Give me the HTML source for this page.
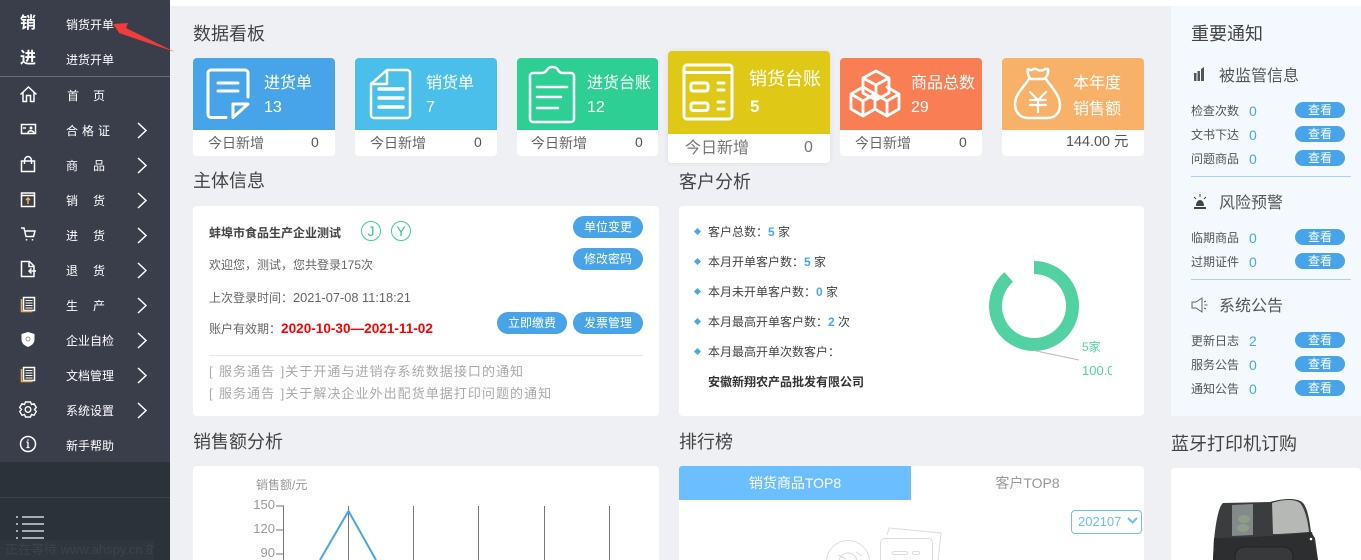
<!DOCTYPE html>
<html lang="zh-CN"><head><meta charset="utf-8"><title>数据看板</title>
<style>
html,body{margin:0;padding:0;width:1361px;height:560px;overflow:hidden;background:#eff0f4}
body{position:relative;font-family:"Liberation Sans","Noto Sans CJK SC",sans-serif;font-size:12px;color:#444}
.b{position:absolute}
.t{position:absolute;white-space:nowrap;line-height:20px;margin-top:1px}
.h{font-size:18px;color:#444;line-height:24px}
.m{color:#fff;font-size:12px;left:66px}
.c16{font-size:16px;color:#fff}
.g{font-size:14px;color:#666}
.n{font-size:14px;color:#555}
.card{position:absolute;background:#fff;border-radius:4px;overflow:hidden}
.btn{position:absolute;background:#48a4e8;color:#fff;text-align:center;border-radius:11px;width:70px;height:22px;line-height:22px;font-size:12px}
.v{position:absolute;left:1295px;width:50px;height:16px;line-height:16px;border-radius:8px;background:#48a4e8;color:#fff;text-align:center;font-size:12px}
.r{font-size:12px;color:#555;left:1191px}
.num{font-size:14px;color:#4aa7ee;left:1249px}
.s{font-size:16px;color:#555;left:1219px;margin-top:2px}
.cu{left:708px;font-size:12px;color:#444}
.cu b{color:#4aa7ee}
.d{position:absolute;left:695px;width:5px;height:5px;background:#4aa7ee;transform:rotate(45deg)}
.no{left:209px;color:#aaa;font-size:13px;letter-spacing:1.05px;word-spacing:.7px}
.y{font-size:13px;color:#999;text-align:right;width:40px;left:235px;margin-top:0}
</style></head><body>
<div class="b" style="left:170px;top:0;width:1191px;height:6px;background:#fff"></div>
<div class="b" style="left:0;top:0;width:170px;height:462px;background:#3a3d4a"></div>
<div class="b" style="left:0;top:462px;width:170px;height:98px;background:#2b3339"></div>
<div class="b" style="left:0;top:76px;width:170px;height:1px;background:#6c6e76"></div>
<div class="b" style="left:0;top:497px;width:170px;height:1px;background:#3d454b"></div>
<div class="t" style="left:20px;top:13px;color:#fff;font-size:16px;font-weight:bold">销</div>
<div class="t" style="left:20px;top:48px;color:#fff;font-size:16px;font-weight:bold">进</div>
<div class="t m" style="top:14px">销货开单</div>
<div class="t m" style="top:49px">进货开单</div>
<div class="t m" style="top:85px;left:67px;letter-spacing:14px">首页</div>
<div class="t m" style="top:120px;letter-spacing:4px">合格证</div>
<div class="t m" style="top:155px;letter-spacing:15px">商品</div>
<div class="t m" style="top:190px;letter-spacing:15px">销货</div>
<div class="t m" style="top:225px;letter-spacing:15px">进货</div>
<div class="t m" style="top:260px;letter-spacing:15px">退货</div>
<div class="t m" style="top:295px;letter-spacing:15px">生产</div>
<div class="t m" style="top:330px">企业自检</div>
<div class="t m" style="top:365px">文档管理</div>
<div class="t m" style="top:400px">系统设置</div>
<div class="t m" style="top:435px">新手帮助</div>
<svg class="b" style="left:0;top:0" width="170" height="560" fill="none" stroke="#fff" stroke-width="1.500">
<path d="M138 123l8 7.500-8 7.500M138 158l8 7.500-8 7.500M138 193l8 7.500-8 7.500M138 228l8 7.500-8 7.500M138 263l8 7.500-8 7.500M138 298l8 7.500-8 7.500M138 333l8 7.500-8 7.500M138 368l8 7.500-8 7.500M138 403l8 7.500-8 7.500"/>
<path d="M20.500 94.500L28.500 87 36.500 94.500M23 92v9.500h3.500v-6h4v6H34V92"/>
<rect x="21.500" y="124.500" width="14" height="9"/><circle cx="31" cy="128" r="1.500" fill="#fff" stroke="none"/><path d="M28 133c0-3 5-3 6 0M23 128h3" stroke-width="1.500"/>
<path d="M21.500 161h13v10.500h-13zM24.500 164v-3c0-6 7-6 7 0v3"/>
<rect x="21.500" y="193" width="13" height="13.500"/><path d="M21.500 195.500h13"/><path d="M28 204v-6M26 200l2-2 2 2" stroke="#f0b050"/>
<path d="M21 228h3l2 8.500h7.500L35 231H25M26.500 239v1.500M32.500 239v1.500"/>
<path d="M21.500 261.500h8l4.500 4.500v10.500h-12.500zM29 261.500v5h5M36 271h-7M31.500 268.500L29 271l2.500 2.500"/>
<g><path d="M23.500 297.500h11v13h-11z"/><path d="M21.500 299v12.500h11" stroke="#e0b060"/><path d="M25.500 300.500h7M25.500 303h7M25.500 305.500h7M25.500 308h7" stroke-width="1"/></g>
<path d="M28 332l6.500 2v5.500c0 4-3 6-6.500 7.500-3.500-1.500-6.500-3.500-6.500-7.500V334z" fill="#fff" stroke="none"/><circle cx="28" cy="339" r="2" stroke="#999" stroke-width="1"/>
<g transform="translate(0 70)"><path d="M23.500 297.500h11v13h-11z"/><path d="M21.500 299v12.500h11" stroke="#e0b060"/><path d="M25.500 300.500h7M25.500 303h7M25.500 305.500h7M25.500 308h7" stroke-width="1"/></g>
<path d="M25.500 402l5 0 1 2.500 2.500-.8 2.300 3.800-1.800 2 1.800 2-2.300 3.800-2.500-.8-1 2.500h-5l-1-2.500-2.500.8-2.300-3.800 1.800-2-1.800-2 2.300-3.800 2.500.8z" stroke-width="1.400"/><circle cx="28" cy="409.500" r="2.800" stroke-width="1.400"/>
<circle cx="28" cy="444" r="7.500"/><path d="M28 442v5.500M26.500 447.500h3M26.500 442H28" stroke-width="1.300"/><circle cx="28" cy="440" r=".8" fill="#fff" stroke="none"/>
<path d="M22 517h22M22 524h22M22 531h22M22 538h22" stroke="#a8adb0" stroke-width="2"/>
<path d="M16 517h2M16 524h2M16 531h2M16 538h2" stroke="#a8adb0" stroke-width="2"/>
</svg>
<div class="b" style="left:0;top:540px;width:154px;height:20px;background:#2f373c;color:#3c444a;font-size:13px;line-height:20px;white-space:nowrap;overflow:hidden;padding-left:5px;box-sizing:border-box">正在等待 www.ahspy.cn 的</div>
<svg class="b" style="left:100px;top:15px" width="80" height="42"><polygon points="13,9 28,8 26,13 75,37 19,18 22,22" fill="#f23b3b"/></svg>

<div class="t h" style="left:193px;top:21px">数据看板</div>
<div class="t h" style="left:193px;top:168px">主体信息</div>
<div class="t h" style="left:679px;top:169px">客户分析</div>
<div class="t h" style="left:193px;top:429px">销售额分析</div>
<div class="t h" style="left:679px;top:429px">排行榜</div>
<div class="t h" style="left:1171px;top:431px">蓝牙打印机订购</div>

<!-- stat cards -->
<div class="card" style="left:193px;top:58px;width:142px;height:98px"><div style="height:72px;background:#48a4e8"></div></div>
<div class="card" style="left:355px;top:58px;width:142px;height:98px"><div style="height:72px;background:#4abfea"></div></div>
<div class="card" style="left:517px;top:58px;width:141px;height:98px"><div style="height:72px;background:#2ecf94"></div></div>
<div class="card" style="left:840px;top:58px;width:142px;height:98px"><div style="height:72px;background:#f97e53"></div></div>
<div class="card" style="left:1002px;top:58px;width:142px;height:98px"><div style="height:72px;background:#f8b168"></div></div>
<div class="card" style="left:668px;top:51px;width:162px;height:112px;box-shadow:0 0 6px rgba(0,0,0,.08)"><div style="height:83px;background:#e0c916"></div></div>

<svg class="b" style="left:0;top:0" width="1361" height="170" fill="none" stroke="#fff" stroke-width="3" stroke-linecap="round" stroke-linejoin="round">
<path d="M226 117.500h-15a3 3 0 0 1-3-3V73a3 3 0 0 1 3-3h34a3 3 0 0 1 3 3v24M233 104h15l-15 13.500zM218 83h20M218 91h20"/>
<path d="M387 70h20a3 3 0 0 1 3 3v42a3 3 0 0 1-3 3h-33a3 3 0 0 1-3-3V84zM387 70v14h-15" stroke-width="2.500"/>
<path d="M379 89h24M379 98h24M379 107h24" stroke-width="3.500"/>
<path d="M541 73h-8a3 3 0 0 0-3 3v43a3 3 0 0 0 3 3h38a3 3 0 0 0 3-3V76a3 3 0 0 0-3-3h-8c-2 0-3 0-5-3-2-4-9-4-11 0-2 3-4 3-6 3zM537 87h30M537 97h24M537 108h21" stroke-width="2.500"/>
<rect x="684" y="65" width="48" height="54" rx="3"/><path d="M684 72.500h48"/>
<rect x="691" y="83" width="17" height="8" rx="2"/><rect x="691" y="103" width="17" height="7.500" rx="2"/><path d="M718 83h6M718 90h6M718 102h6M718 109h6" stroke-width="3"/>
<path d="M876 71l13 7v15l-13 7-13-7V78zM863 78l13 7 13-7M876 85v15" stroke-width="2.800"/>
<path d="M863 87l12 7v15l-12 7-12-7V94zM851 94l12 7 12-7M863 101v15" stroke-width="2.800"/>
<path d="M887 87l12 7v15l-12 7-12-7M875 94l12 7 12-7M887 101v15" stroke-width="2.800"/>
<path d="M1028 69c3 3 5-1 8 0 3 2 7 2 9 0l3 0c1 6-3 10-5 10h-12c-2-1-4-5-3-10zM1029 79c-5 8-14 15-14 25 0 9 6 14 13 14h19c9 0 13-6 13-13 0-10-9-18-14-26" stroke-width="2.500"/>
<path d="M1030 92l8 8 8-8M1038 100v12M1030 100h16M1030 105h16" stroke-width="2.200"/>
</svg>

<div class="t c16" style="left:264px;top:73px">进货单</div><div class="t c16" style="left:264px;top:97px">13</div>
<div class="t g" style="left:208px;top:132px">今日新增</div><div class="t n" style="left:311px;top:131px">0</div>
<div class="t c16" style="left:426px;top:73px">销货单</div><div class="t c16" style="left:426px;top:97px">7</div>
<div class="t g" style="left:370px;top:132px">今日新增</div><div class="t n" style="left:474px;top:131px">0</div>
<div class="t c16" style="left:587px;top:73px">进货台账</div><div class="t c16" style="left:587px;top:97px">12</div>
<div class="t g" style="left:531px;top:132px">今日新增</div><div class="t n" style="left:635px;top:131px">0</div>
<div class="t" style="left:749px;top:68px;font-size:18px;color:#fff">销货台账</div><div class="t" style="left:750px;top:96px;font-size:17px;color:#fff;font-weight:bold">5</div>
<div class="t" style="left:685px;top:138px;font-size:16px;color:#777">今日新增</div><div class="t" style="left:804px;top:137px;font-size:16px;color:#777">0</div>
<div class="t c16" style="left:911px;top:73px">商品总数</div><div class="t c16" style="left:911px;top:97px">29</div>
<div class="t g" style="left:855px;top:132px">今日新增</div><div class="t n" style="left:959px;top:131px">0</div>
<div class="t c16" style="left:1073px;top:73px">本年度</div><div class="t c16" style="left:1073px;top:99px">销售额</div>
<div class="t n" style="left:1066px;top:131px;font-size:14.400px">144.00 元</div>

<!-- info -->
<div class="card" style="left:193px;top:206px;width:466px;height:210px"></div>
<div class="t" style="left:209px;top:222px;font-weight:bold;color:#444">蚌埠市食品生产企业测试</div>
<div class="b" style="left:361px;top:221px;width:18px;height:18px;border:1px solid #3dcfa0;border-radius:50%;text-align:center;line-height:18px;font-size:14px;color:#35c596">J</div>
<div class="b" style="left:391px;top:221px;width:18px;height:18px;border:1px solid #3dcfa0;border-radius:50%;text-align:center;line-height:18px;font-size:14px;color:#35c596">Y</div>
<div class="btn" style="left:573px;top:216px">单位变更</div>
<div class="btn" style="left:573px;top:248px">修改密码</div>
<div class="btn" style="left:497px;top:312px">立即缴费</div>
<div class="btn" style="left:573px;top:312px">发票管理</div>
<div class="t" style="left:209px;top:254px;color:#666">欢迎您，测试，您共登录175次</div>
<div class="t" style="left:209px;top:287px;color:#666">上次登录时间：<span style="font-size:12.800px">2021-07-08 11:18:21</span></div>
<div class="t" style="left:209px;top:318px;color:#666">账户有效期：<b style="color:#f00;font-size:13.600px">2020-10-30—2021-11-02</b></div>
<div class="b" style="left:209px;top:355px;width:434px;height:1px;background:#e6e6e6"></div>
<div class="t no" style="top:361px">[ 服务通告 ]关于开通与进销存系统数据接口的通知</div>
<div class="t no" style="top:383px">[ 服务通告 ]关于解决企业外出配货单据打印问题的通知</div>

<!-- customers -->
<div class="card" style="left:679px;top:206px;width:465px;height:210px"></div>
<div class="d" style="top:229px"></div><div class="d" style="top:259px"></div><div class="d" style="top:289px"></div><div class="d" style="top:319px"></div><div class="d" style="top:349px"></div>
<div class="t cu" style="top:221px">客户总数：<b>5</b> 家</div>
<div class="t cu" style="top:251px">本月开单客户数：<b>5</b> 家</div>
<div class="t cu" style="top:281px">本月未开单客户数：<b>0</b> 家</div>
<div class="t cu" style="top:311px">本月最高开单客户数：<b>2</b> 次</div>
<div class="t cu" style="top:341px">本月最高开单次数客户：</div>
<div class="t cu" style="top:371px;font-weight:bold;color:#333">安徽新翔农产品批发有限公司</div>
<svg class="b" style="left:980px;top:250px" width="110" height="115" fill="none">
<path d="M54 17.500A38.500 38.500 0 1 1 28.700 27" stroke="#52d2a2" stroke-width="13"/>
<path d="M54 5v6" stroke="#eee"/>
<path d="M54 100.500l45 9.500" stroke="#bbb"/>
</svg>
<div class="t" style="left:1082px;top:336px;color:#52d2a2">5家</div>
<div class="t" style="left:1082px;top:360px;width:30px;overflow:hidden;color:#52d2a2;font-size:13px">100.00%</div>

<!-- right panel -->
<div class="b" style="left:1171px;top:6px;width:190px;height:410px;background:#f3f9ff"></div>
<div class="t h" style="left:1191px;top:21px">重要通知</div>
<svg class="b" style="left:1190px;top:64px" width="20" height="20" fill="#555"><path d="M4 9h2.500v8H4zM7.500 7H10v10H7.500zM11 5l3-2v14h-3z"/></svg>
<div class="t s" style="top:65px">被监管信息</div>
<svg class="b" style="left:1190px;top:192px" width="20" height="20"><path d="M4 15h12v2H4zM6 14c0-8 8-8 8 0z" fill="#444"/><path d="M10 2v3M4 5l2 2M16 5l-2 2" stroke="#444" fill="none"/></svg>
<div class="t s" style="top:192px">风险预警</div>
<svg class="b" style="left:1190px;top:295px" width="20" height="20" fill="none" stroke="#666"><path d="M2 7v6h4l6 4V3L6 7zM14 7l2-1M14.500 10h3M14 13l2 1"/></svg>
<div class="t s" style="top:295px">系统公告</div>
<div class="t r" style="top:100px">检查次数</div><div class="t num" style="top:100px">0</div><div class="v" style="top:102px">查看</div>
<div class="t r" style="top:124px">文书下达</div><div class="t num" style="top:124px">0</div><div class="v" style="top:126px">查看</div>
<div class="t r" style="top:148px">问题商品</div><div class="t num" style="top:148px">0</div><div class="v" style="top:150px">查看</div>
<div class="b" style="left:1191px;top:176px;width:160px;height:1px;background:#a3d3fb"></div>
<div class="t r" style="top:227px">临期商品</div><div class="t num" style="top:227px">0</div><div class="v" style="top:229px">查看</div>
<div class="t r" style="top:251px">过期证件</div><div class="t num" style="top:251px">0</div><div class="v" style="top:253px">查看</div>
<div class="b" style="left:1191px;top:279px;width:160px;height:1px;background:#a3d3fb"></div>
<div class="t r" style="top:330px">更新日志</div><div class="t num" style="top:330px">2</div><div class="v" style="top:332px">查看</div>
<div class="t r" style="top:354px">服务公告</div><div class="t num" style="top:354px">0</div><div class="v" style="top:356px">查看</div>
<div class="t r" style="top:378px">通知公告</div><div class="t num" style="top:378px">0</div><div class="v" style="top:380px">查看</div>

<!-- chart -->
<div class="card" style="left:193px;top:466px;width:466px;height:110px"></div>
<div class="t" style="left:256px;top:474px;color:#999">销售额/元</div>
<div class="t y" style="top:495px">150</div><div class="t y" style="top:519px">120</div><div class="t y" style="top:543px">90</div>
<svg class="b" style="left:270px;top:500px" width="345" height="60" fill="none">
<path d="M13.500 6v54M6 6h8M6 30h8M6 54h8M78.500 6v54M143.500 6v54M208.500 6v54M274.500 6v54M339.500 6v54" stroke="#777"/>
<path d="M50 60L78.500 11 106 60" stroke="#4aa5ea" stroke-width="2"/>
</svg>

<!-- rank -->
<div class="card" style="left:679px;top:466px;width:465px;height:110px"></div>
<div class="b" style="left:679px;top:466px;width:232px;height:34px;background:#6bbeff;color:#fff;text-align:center;line-height:34px;font-size:14px;border-radius:3px 0 0 0">销货商品TOP8</div>
<div class="b" style="left:911px;top:466px;width:233px;height:34px;color:#999;text-align:center;line-height:34px;font-size:14px">客户TOP8</div>
<div class="b" style="left:1071px;top:510px;height:22px;border:1px solid #6bbeff;border-radius:4px;color:#6bbeff;font-size:13px;line-height:22px;padding-left:6px;width:63px">202107</div>
<svg class="b" style="left:1125px;top:516px" width="14" height="10" fill="none"><path d="M3 2l4.500 4.500L12 2" stroke="#6bbeff" stroke-width="2"/></svg>
<svg class="b" style="left:820px;top:525px" width="125" height="35" fill="none" stroke="#ddd" stroke-width="1">
<circle cx="28" cy="37" r="21.500"/><circle cx="28" cy="37" r="9"/><path d="M18 30l8 4M36 27l6 4"/>
<path d="M67 10l2-7 52 5-3 27"/>
<rect x="60.500" y="13.500" width="52" height="40" rx="4" fill="#fff"/>
<rect x="72.500" y="26.500" width="15" height="3" rx="1.500"/><rect x="92.500" y="26.500" width="7" height="3" rx="1.500"/>
</svg>

<!-- printer -->
<div class="card" style="left:1171px;top:468px;width:190px;height:110px"></div>
<svg class="b" style="left:1190px;top:470px" width="150" height="90">
<path d="M24 70C26 50 29 36 33 33L80 32C90 29 105 27 112 32 116 35 119 45 121 62L125 68 128 90H23Z" fill="#3a3c3e"/>
<path d="M82 33C90 30 104 28 110 33 114 37 118 50 119 62 105 63 92 64 83 64Z" fill="#b5b8b5"/>
<path d="M42 35l21-1v31l-21 1z" fill="#85898a"/>
<ellipse cx="54" cy="49" rx="6" ry="4" fill="#8c9d88"/><ellipse cx="53" cy="58" rx="6" ry="4" fill="#8c9d88"/>
<path d="M24 68C50 68 90 66 122 62L128 90H23Z" fill="#2c2e30"/>
<rect x="45" y="77" width="58" height="20" rx="9" fill="#37393b" stroke="#222"/>
<circle cx="121" cy="69" r="1.300" fill="#fff"/>
</svg>
</body></html>
